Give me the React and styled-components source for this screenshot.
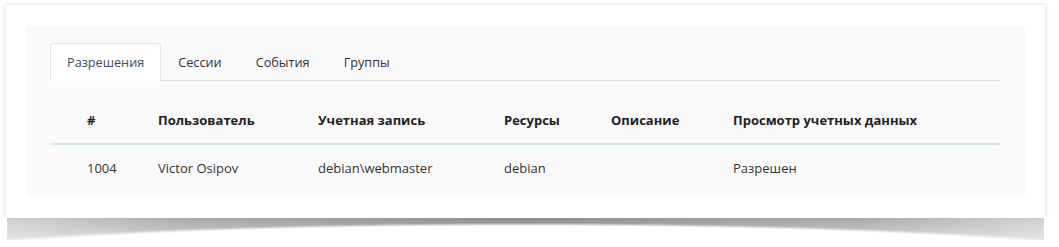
import styled, { createGlobalStyle } from "styled-components"

const Global = createGlobalStyle`
  html, body {
    margin: 0;
    background: #fff;
    font-family: "Open Sans", "Noto Sans", sans-serif;
  }
`

const Page = styled.div`
  box-sizing: border-box;
  width: 1059px;
  height: 247px;
  padding: 5px 0 0 6px;
`

const Card = styled.div`
  box-sizing: border-box;
  width: 1039px;
  height: 213px;
  padding: 21px 20px;
  background: #fff;
  box-shadow: 0 0 4px rgba(0, 0, 0, 0.18);
`

// curled drop shadow under the card's bottom edge
const CurlShadow = styled.div`
  width: 1037px;
  height: 22px;
  margin-left: 1px;
  background:
    linear-gradient(to bottom, rgba(255, 255, 255, 0) 0%, rgba(255, 255, 255, 0.45) 100%),
    linear-gradient(
      to right,
      #d0d0d0 0%,
      #a9a9a9 18%,
      #8c8c8c 50%,
      #a9a9a9 82%,
      #d0d0d0 100%
    );
  -webkit-mask-image: radial-gradient(ellipse 670px 42px at 50% 47px, transparent 93%, #000 100%);
  mask-image: radial-gradient(ellipse 670px 42px at 50% 47px, transparent 93%, #000 100%);
  filter: blur(0.7px);
`

const Panel = styled.div`
  box-sizing: border-box;
  height: 171px;
  padding: 17px 24px 0;
  background: #fafafa;
`

const Tabs = styled.div`
  display: flex;
  border-bottom: 1px solid #dfe3e5;
`

const Tab = styled.div`
  box-sizing: border-box;
  height: 38px;
  padding: 0 16px;
  margin-bottom: -1px;
  display: flex;
  align-items: center;
  font-size: 12.7px;
  color: ${p => (p.$active ? "#3b4f5e" : "#333")};
  background: ${p => (p.$active ? "#fff" : "transparent")};
  border: 1px solid ${p => (p.$active ? "#dbe7ea" : "transparent")};
  border-bottom-color: ${p => (p.$active ? "#fff" : "transparent")};
  border-radius: 4px 4px 0 0;
`

const Row = styled.div`
  box-sizing: border-box;
  display: grid;
  grid-template-columns: 71px 160px 186px 107px 122px 1fr;
  align-items: center;
  padding-left: 37px;
  height: ${p => (p.$head ? "64px" : "48px")};
  padding-top: ${p => (p.$head ? "16px" : "0")};
  padding-bottom: ${p => (p.$head ? "0" : "2px")};
  border-bottom: ${p => (p.$head ? "2px solid #d3e9ec" : "none")};
  font-size: 13px;
  font-weight: ${p => (p.$head ? 700 : 400)};
  color: ${p => (p.$head ? "#222" : "#333")};
`

const Cell = styled.div`
  white-space: nowrap;
`

const headers = ["#", "Пользователь", "Учетная запись", "Ресурсы", "Описание", "Просмотр учетных данных"]
const rows = [["1004", "Victor Osipov", "debian\\webmaster", "debian", "", "Разрешен"]]

export default function App() {
  return (
    <>
      <Global />
      <Page>
        <Card>
          <Panel>
            <Tabs>
              <Tab $active>Разрешения</Tab>
              <Tab>Сессии</Tab>
              <Tab>События</Tab>
              <Tab>Группы</Tab>
            </Tabs>
            <Row $head>
              {headers.map(h => <Cell key={h}>{h}</Cell>)}
            </Row>
            {rows.map((r, i) => (
              <Row key={i}>
                {r.map((c, j) => <Cell key={j}>{c}</Cell>)}
              </Row>
            ))}
          </Panel>
        </Card>
        <CurlShadow />
      </Page>
    </>
  )
}
